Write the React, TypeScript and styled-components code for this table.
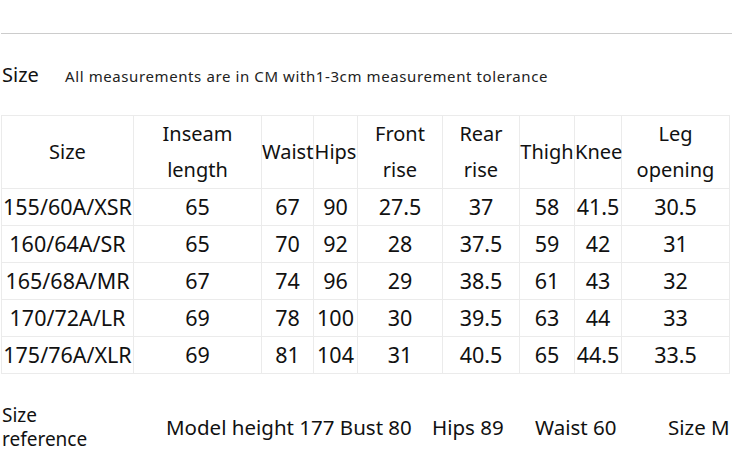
import styled, { createGlobalStyle } from 'styled-components';

const GlobalStyle = createGlobalStyle`
  body {
    margin: 0;
    background: #ffffff;
    font-family: 'Noto Sans', 'Open Sans', sans-serif;
    color: #111111;
  }
`;

const Page = styled.div`
  width: 732px;
  height: 452px;
  padding-top: 33px;
  box-sizing: border-box;
  overflow: hidden;
`;

const Rule = styled.div`
  margin-left: 1px;
  height: 1px;
  background: #cccccc;
`;

const TitleRow = styled.div`
  display: flex;
  align-items: baseline;
  height: 81px;
  padding-top: 27px;
  box-sizing: border-box;
  padding-left: 2px;
`;

const Title = styled.span`
  font-size: 20px;
  width: 63px;
`;

const Note = styled.span`
  font-size: 15px;
  letter-spacing: 0.6px;
  color: #222222;
`;

const Table = styled.table`
  margin-left: 1px;
  border-collapse: collapse;
  table-layout: fixed;
  width: 729px;
  font-size: 20px;
  text-align: center;
`;

const Cell = styled.td<{ $head?: boolean }>`
  border: 1px solid #ebebeb;
  padding: 0;
  height: ${({ $head }) => ($head ? '72px' : '36px')};
  line-height: ${({ $head }) => ($head ? '36px' : '24px')};
  font-size: ${({ $head }) => ($head ? '20px' : '21.5px')};
  white-space: ${({ $head }) => ($head ? 'normal' : 'nowrap')};
`;

const Footer = styled.div`
  display: flex;
  align-items: center;
  height: 79px;
  font-size: 20.5px;
`;

const RefLabel = styled.div`
  width: 166px;
  padding-left: 2px;
  box-sizing: border-box;
  font-size: 19px;
  line-height: 24px;
  padding-top: 26px;
`;

const RefItem = styled.div<{ $w: number }>`
  width: ${({ $w }) => $w}px;
  white-space: nowrap;
  padding-top: 27px;
`;

const widths = [132, 128, 52, 44, 85, 77, 55, 47, 108];

const headers = [
  ['Size'],
  ['Inseam', 'length'],
  ['Waist'],
  ['Hips'],
  ['Front', 'rise'],
  ['Rear', 'rise'],
  ['Thigh'],
  ['Knee'],
  ['Leg', 'opening'],
];

const rows = [
  ['155/60A/XSR', '65', '67', '90', '27.5', '37', '58', '41.5', '30.5'],
  ['160/64A/SR', '65', '70', '92', '28', '37.5', '59', '42', '31'],
  ['165/68A/MR', '67', '74', '96', '29', '38.5', '61', '43', '32'],
  ['170/72A/LR', '69', '78', '100', '30', '39.5', '63', '44', '33'],
  ['175/76A/XLR', '69', '81', '104', '31', '40.5', '65', '44.5', '33.5'],
];

export default function App() {
  return (
    <Page>
      <GlobalStyle />
      <Rule />
      <TitleRow>
        <Title>Size</Title>
        <Note>All measurements are in CM with1-3cm measurement tolerance</Note>
      </TitleRow>
      <Table>
        <colgroup>
          {widths.map((w, i) => (
            <col key={i} style={{ width: w }} />
          ))}
        </colgroup>
        <tbody>
          <tr>
            {headers.map((h, i) => (
              <Cell key={i} $head>
                {h.map((line, j) => (
                  <div key={j}>{line}</div>
                ))}
              </Cell>
            ))}
          </tr>
          {rows.map((r, i) => (
            <tr key={i}>
              {r.map((v, j) => (
                <Cell key={j}>{v}</Cell>
              ))}
            </tr>
          ))}
        </tbody>
      </Table>
      <Footer>
        <RefLabel>
          Size
          <br />
          reference
        </RefLabel>
        <RefItem $w={266}>Model height 177 Bust 80</RefItem>
        <RefItem $w={103}>Hips 89</RefItem>
        <RefItem $w={133}>Waist 60</RefItem>
        <RefItem $w={64}>Size M</RefItem>
      </Footer>
    </Page>
  );
}
